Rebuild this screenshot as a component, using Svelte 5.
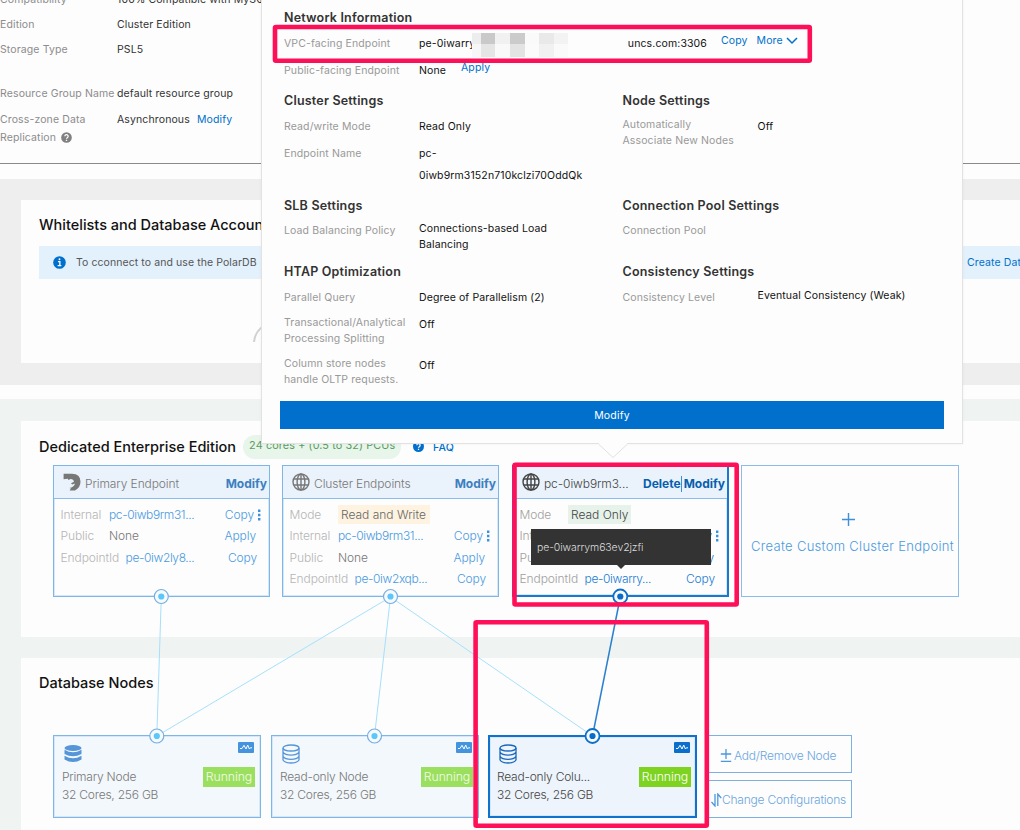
<script>
  const basics = [
    { label: "Compatibility", value: "100% Compatible with MySQL" },
    { label: "Edition", value: "Cluster Edition" },
    { label: "Storage Type", value: "PSL5", gap: true },
    { label: "Resource Group Name", value: "default resource group" },
  ];

  const groups = [
    {
      title: "Cluster Settings",
      rows: [
        { label: "Read/write Mode", value: "Read Only" },
        { label: "Endpoint Name", value: "pc- 0iwb9rm3152n710kclzi70OddQk", loose: true },
      ],
    },
    {
      title: "Node Settings",
      rows: [{ label: "Automatically Associate New Nodes", value: "Off", tallLabel: true, narrow: true }],
    },
    {
      title: "SLB Settings",
      tight: true,
      rows: [{ label: "Load Balancing Policy", value: "Connections-based Load Balancing", tallValue: true }],
    },
    {
      title: "Connection Pool Settings",
      tight: true,
      rows: [{ label: "Connection Pool", value: "" }],
    },
    {
      title: "HTAP Optimization",
      rows: [
        { label: "Parallel Query", value: "Degree of Parallelism (2)" },
        { label: "Transactional/Analytical Processing Splitting", value: "Off", tallLabel: true },
        { label: "Column store nodes handle OLTP requests.", value: "Off", tallLabel: true },
      ],
    },
    {
      title: "Consistency Settings",
      rows: [{ label: "Consistency Level", value: "Eventual Consistency (Weak)", tallValue: true }],
    },
  ];

  const endpoints = [
    {
      x: 53,
      title: "Primary Endpoint",
      icon: "polar",
      rows: [
        { label: "Internal", value: "pc-0iwb9rm31...", action: "Copy", more: true },
        { label: "Public", value: "None", plain: true, action: "Apply" },
        { label: "EndpointId", value: "pe-0iw2ly8...", action: "Copy" },
      ],
    },
    {
      x: 282,
      title: "Cluster Endpoints",
      icon: "globe",
      mode: "Read and Write",
      rows: [
        { label: "Internal", value: "pc-0iwb9rm31...", action: "Copy", more: true },
        { label: "Public", value: "None", plain: true, action: "Apply" },
        { label: "EndpointId", value: "pe-0iw2xqb...", action: "Copy" },
      ],
    },
    {
      x: 512,
      title: "pc-0iwb9rm3...",
      icon: "globe",
      mode: "Read Only",
      active: true,
      rows: [
        { label: "Internal", value: "pe-0iwarry...", action: "Copy", more: true },
        { label: "Public", value: "None", plain: true, action: "Apply" },
        { label: "EndpointId", value: "pe-0iwarry...", action: "Copy" },
      ],
    },
  ];

  const nodes = [
    { x: 53, name: "Primary Node", solid: true },
    { x: 271, name: "Read-only Node" },
    { x: 488, name: "Read-only Colu...", active: true },
  ];

  const links = [
    [161.3, 156.8],
    [390.5, 156.8],
    [390.5, 374.5],
    [390.5, 592.5],
    [620.3, 592.5, true],
  ];

  const ports = [
    [161.3, 596.5],
    [390.5, 596.5],
    [620.3, 596.5, true],
    [156.8, 736],
    [374.5, 736],
    [592.5, 736, true],
  ];

  // masked part of the endpoint address: x, width, upper shade, lower shade
  const mask = [
    [0, 9, "#ededed", "#f7f7f7"],
    [9, 14, "#c9c9c9", "#e5e5e5"],
    [23, 15, "#f1f1f1", "#f9f9f9"],
    [38, 15, "#cbcbcb", "#e3e3e3"],
    [53, 14, "#fafafa", "#fbfbfb"],
    [67, 15, "#e9e9e9", "#f1f1f1"],
    [82, 14, "#f3f3f3", "#fafafa"],
  ];
</script>

<div class="page">
  <section class="basics">
    {#each basics as item}
      <div class="basic" class:gap={item.gap}>
        <span class="label">{item.label}</span>
        <span>{item.value}</span>
      </div>
    {/each}
    <div class="basic zone">
      <span class="label">
        Cross-zone Data<br />Replication
        <svg class="help" viewBox="0 0 12 12" width="11" height="11">
          <circle cx="6" cy="6" r="5.8" fill="#808080" />
          <path d="M4.2 4.7a1.8 1.8 0 1 1 2.7 1.5Q6 6.7 6 7.3M6 8.5v1.2" fill="none" stroke="#fff" stroke-width="1.4" />
        </svg>
      </span>
      <span>Asynchronous <a href="#modify">Modify</a></span>
    </div>
  </section>

  <section class="band grey">
    <div class="card accounts">
      <h2>Whitelists and Database Accoun</h2>
      <div class="notice">
        <svg viewBox="0 0 14 14" width="13" height="13">
          <circle cx="7" cy="7" r="6.8" fill="#0070cc" />
          <path d="M5.4 6h2v4M5 10.3h4" fill="none" stroke="#fff" stroke-width="1.4" />
          <circle cx="7" cy="3.5" r="1" fill="#fff" />
        </svg>
        <span>To cconnect to and use the PolarDB</span>
        <a href="#create">Create Dat</a>
      </div>
      <svg class="ghost" viewBox="0 0 44 36" width="44" height="36">
        <circle cx="20" cy="11" r="10" />
        <path d="M1 36Q2 25 12 19M39 36Q38 25 28 19" />
      </svg>
    </div>
  </section>

  <section class="band mint">
    <div class="card edition">
      <div class="edition-head">
        <h2>Dedicated Enterprise Edition</h2>
        <span class="pcu">24 cores + (0.5 to 32) PCUs</span>
        <svg viewBox="0 0 12 12" width="11" height="11">
          <circle cx="6" cy="6" r="6" fill="#0070cc" />
          <path d="M4.2 4.7a1.8 1.8 0 1 1 2.7 1.5Q6 6.7 6 7.3M6 8.5v1.2" fill="none" stroke="#fff" stroke-width="1.4" />
        </svg>
        <a href="#faq">FAQ</a>
      </div>
    </div>
    <div class="card databases">
      <h2>Database Nodes</h2>
    </div>
  </section>

  <div class="canvas">
    {#each endpoints as endpoint}
      <article class="endpoint" class:active={endpoint.active} style="left: {endpoint.x}px">
        <header>
          {#if endpoint.icon === "globe"}
            <svg class="globe" viewBox="0 0 18 18" width="18" height="18">
              <circle cx="9" cy="9" r="8" />
              <ellipse cx="9" cy="9" rx="3.9" ry="8" />
              <path d="M9 1v16M1.6 6h14.8M1.6 12h14.8" />
            </svg>
          {:else}
            <svg viewBox="0 0 18 18" width="18" height="18">
              <path
                d="M.6.8H9Q17.4 1 17.5 8.6Q17.5 15 12 17.4H6.6L8 15.6 6.4 15Q11 14.4 12 10.6L9.2 11.6 8 10.2 11 8.8Q10.6 6.2 7.6 6L5.4 7 4.8 5.8 .6 6.2Z"
                fill="#777"
              />
            </svg>
          {/if}
          <span class="name">{endpoint.title}</span>
          <span class="tools">
            {#if endpoint.active}<a class="delete" href="#delete">Delete</a>{/if}
            <a href="#modify">Modify</a>
          </span>
        </header>
        <div class="lines">
          {#if endpoint.mode}
            <div class="line">
              <span class="key">Mode</span>
              <span class="mode" class:readonly={endpoint.active}>{endpoint.mode}</span>
            </div>
          {/if}
          {#each endpoint.rows as row}
            <div class="line">
              <span class="key">{row.label}</span>
              <span class="val" class:plain={row.plain}>{row.value}</span>
              <a class="act" class:apply={row.plain} class:with-more={row.more} href="#act">{row.action}</a>
              {#if row.more}
                <svg class="dots" viewBox="0 0 3 12" width="3" height="12">
                  <path d="M0 .5h2.4v2.4H0zM0 4.8h2.4v2.4H0zM0 9.1h2.4v2.4H0z" />
                </svg>
              {/if}
            </div>
          {/each}
        </div>
      </article>
    {/each}

    <div class="create">
      <svg viewBox="0 0 12 12" width="13" height="13"><path d="M6 0v12M0 6h12" stroke="#3f90dc" stroke-width="1.3" /></svg>
      <span>Create Custom Cluster Endpoint</span>
    </div>

    {#each nodes as node}
      <article class="node" class:active={node.active} style="left: {node.x}px">
        <div class="node-top">
          <svg class="db" class:solid={node.solid} viewBox="0 0 18 20" width="18" height="20">
            {#if node.solid}
              <ellipse cx="9" cy="4" rx="8.5" ry="3" />
              <path d="M.5 5.8Q9 10.8 17.5 5.8v4.1Q9 14.8.5 9.9ZM.5 11.7Q9 16.7 17.5 11.7V15.4Q9 20.6.5 15.4Z" />
            {:else}
              <ellipse cx="9" cy="4" rx="8" ry="3" />
              <path d="M1 4v12Q3 19 9 19T17 16V4M1 8.2Q3 11.2 9 11.2T17 8.2M1 12.4Q3 15.4 9 15.4T17 12.4" />
            {/if}
          </svg>
          <svg class="monitor" viewBox="0 0 16 11" width="16" height="11">
            <rect width="16" height="11" rx="1" />
            <path d="M2 6.5h2l2-3.2 2 3.7L9.7 3l1.7 4 1-1.2H14" />
          </svg>
        </div>
        <div class="node-row">
          <span>{node.name}</span>
          <span class="state">Running</span>
        </div>
        <div class="spec">32 Cores, 256 GB</div>
      </article>
    {/each}

    <div class="node-actions">
      <button>
        <svg viewBox="0 0 12 14" width="12" height="14"><path d="M6 0v10M.8 5h10.4M.8 12.3h10.4" /></svg>
        Add/Remove Node
      </button>
      <button class="change">
        <svg viewBox="0 0 11 14" width="11" height="14"><path d="M4 1v12L.5 9M6.8 13V1l3.4 4" /></svg>
        Change Configurations
      </button>
    </div>

    <svg class="wires" viewBox="0 0 1020 830" width="1020" height="830">
      {#each links as [from, to, active]}
        <line class:active x1={from} y1="597" x2={to} y2="736" />
      {/each}
      {#each ports as [x, y, active]}
        <circle class="ring" class:active cx={x} cy={y} r="7" />
        <circle class="dot" class:active cx={x} cy={y} r="3.1" />
      {/each}
    </svg>

    <div class="tooltip">pe-0iwarrym63ev2jzfi</div>
  </div>

  <div class="popover">
    <section class="network">
      <h3>Network Information</h3>
      <div class="row">
        <span class="label">VPC-facing Endpoint</span>
        <span class="address">
          <span>pe-0iwarry</span>
          <svg viewBox="0 0 96 24" width="96" height="24">
            {#each mask as [x, width, upper, lower]}
              <rect {x} y="0" {width} height="11" fill={upper} />
              <rect {x} y="11" {width} height="13" fill={lower} />
            {/each}
          </svg>
          <span class="tail">uncs.com:3306</span>
        </span>
        <a href="#copy">Copy</a>
        <a class="more" href="#more">
          More
          <svg viewBox="0 0 12 8" width="12" height="8"><path d="M1 1l5 5 5-5" fill="none" stroke="#0070cc" stroke-width="1.5" /></svg>
        </a>
      </div>
      <div class="row">
        <span class="label">Public-facing Endpoint</span>
        <span class="none">None</span>
        <a href="#apply">Apply</a>
      </div>
    </section>
    <div class="groups">
      {#each groups as group}
        <section>
          <h3 class:tight={group.tight}>{group.title}</h3>
          {#each group.rows as row}
            <div class="row">
              <span class="label" class:tall={row.tallLabel} class:narrow={row.narrow}>{row.label}</span>
              <span class="value" class:tall={row.tallValue} class:loose={row.loose}>{row.value}</span>
            </div>
          {/each}
        </section>
      {/each}
    </div>
    <button class="submit">Modify</button>
    <svg class="arrow" viewBox="0 0 28 16" width="28" height="16">
      <path d="M0 0v1.5L14 14.5 28 1.5V0" fill="#fdfdfd" />
      <path d="M0 1.5L14 14.5 28 1.5" fill="none" stroke="#e2e2e2" />
    </svg>
  </div>

  <svg class="marks" viewBox="0 0 1020 830" width="1020" height="830">
    <rect x="275" y="27" width="534.8" height="33.8" rx="1" />
    <rect x="514.5" y="464.7" width="222.2" height="139.8" rx="1" />
    <rect x="475.6" y="622.3" width="231.2" height="203.4" rx="1" />
  </svg>
</div>

<style>
  :global(body) {
    overflow: hidden;
  }
  .page {
    position: relative;
    width: 1020px;
    height: 830px;
    overflow: hidden;
    background: #fdfdfd;
    color: #333;
    font-family: Inter, "Liberation Sans", sans-serif;
    font-size: 10.5px;
    letter-spacing: 0.12px;
    line-height: 16px;
  }
  a {
    color: #0070cc;
    text-decoration: none;
  }
  h2 {
    margin: 0;
    color: #111;
    font-size: 14.5px;
    font-weight: 500;
    letter-spacing: 0;
    line-height: 20px;
    white-space: nowrap;
  }
  svg {
    flex: none;
    display: block;
  }

  .basics {
    display: flow-root;
    box-sizing: border-box;
    height: 164px;
    margin-bottom: 15px;
    border-bottom: 1px solid #8a8a8a;
  }
  .basic {
    display: flex;
    height: 25px;
    white-space: nowrap;
  }
  .basic:first-child {
    margin-top: -8px;
  }
  .basic.gap {
    height: 44px;
  }
  .basic .label {
    width: 117px;
    color: #8c8c8c;
  }
  .basic.zone {
    margin-top: 1px;
  }
  .zone .label {
    line-height: 18px;
    margin-top: -1px;
  }
  .zone a {
    margin-left: 4px;
  }
  .help {
    display: inline-block;
    margin-left: 2px;
    vertical-align: -2px;
  }

  .band {
    box-sizing: border-box;
    padding-left: 21px;
  }
  .grey {
    height: 206px;
    padding-top: 21px;
    margin-bottom: 14px;
    background: #eee;
  }
  .mint {
    height: 431px;
    padding-top: 22px;
    background: #eff4f3;
  }
  .card {
    box-sizing: border-box;
    padding-left: 18px;
    background: #fdfdfd;
  }
  .accounts {
    height: 163px;
    padding-top: 15px;
  }
  .notice {
    display: flex;
    align-items: center;
    height: 33px;
    margin-top: 11px;
    padding-left: 14px;
    background: #e3f1fd;
    color: #555;
    white-space: nowrap;
  }
  .notice span {
    margin-left: 10px;
    padding-top: 1px;
    letter-spacing: 0.08px;
  }
  .notice a {
    width: 53px;
    margin-left: auto;
    padding-top: 1px;
  }
  .ghost {
    margin: 27px 0 0 214px;
    fill: none;
    stroke: #d2d2d2;
    stroke-width: 2;
  }
  .edition {
    height: 216px;
    margin-bottom: 21px;
    padding-top: 13px;
  }
  .edition-head {
    display: flex;
    align-items: center;
    height: 25px;
  }
  .pcu {
    box-sizing: border-box;
    width: 158px;
    height: 24px;
    margin: 1px 12px 0 7px;
    padding-left: 6px;
    border-radius: 12px;
    background: #e8f5ea;
    color: #5b9c63;
    font-size: 10.8px;
    line-height: 22px;
    white-space: nowrap;
  }
  .edition-head a {
    margin-left: 9px;
    padding-top: 3px;
    font-weight: 500;
  }
  .databases {
    height: 172px;
    padding-top: 15px;
  }

  .canvas {
    position: absolute;
    inset: 0;
    font-size: 12px;
    font-weight: 300;
    letter-spacing: -0.1px;
  }
  .endpoint {
    position: absolute;
    top: 465px;
    box-sizing: border-box;
    width: 217px;
    height: 132px;
    border: 1px solid #7fb6e8;
    box-shadow: inset 0 0 0 1px #d6e8f8;
    color: #777;
  }
  .endpoint.active {
    border-width: 1px 2px 2px 1px;
    border-color: #1a78cf;
    color: #444;
  }
  .endpoint header {
    box-sizing: border-box;
    display: flex;
    align-items: center;
    height: 33px;
    padding: 0 2px 0 9px;
    border-bottom: 1.5px solid #8abdec;
    background: #eaf2fb;
  }
  .name {
    margin: 3px 0 0 4px;
  }
  .tools {
    display: flex;
    margin: 3px 0 0 auto;
    font-weight: 700;
    letter-spacing: 0;
  }
  .tools a {
    color: #3c80c0;
  }
  .active .tools a {
    color: #075fae;
  }
  .tools .delete {
    border-right: 1px solid #3f8dd5;
    margin-right: 2px;
  }
  .globe {
    fill: none;
    stroke: #777;
    stroke-width: 1.4;
  }
  .active .globe {
    stroke: #444;
  }
  .lines {
    padding: 5px 0 0 6.5px;
  }
  .line {
    display: flex;
    align-items: center;
    height: 21.5px;
  }
  .key {
    min-width: 48.5px;
    color: #b5b5b5;
  }
  .active .key {
    color: #a0a0a0;
  }
  .val {
    color: #4a9ae0;
  }
  .val:not(.plain) {
    margin-right: auto;
    letter-spacing: -0.38px;
  }
  .line:last-child .val {
    margin-left: 6.5px;
  }
  .val.plain {
    color: #777;
  }
  .act {
    margin-left: auto;
    margin-right: 12px;
    color: #4a9ae0;
  }
  .act.apply {
    margin-right: 13px;
  }
  .act.with-more {
    margin-right: 4px;
  }
  .dots {
    margin-right: 8px;
    fill: #3f90dc;
  }
  .active .act,
  .active .val {
    color: #1a7bd4;
  }
  .mode {
    padding: 2px 4px 1px 3px;
    background: #fdf3e0;
    color: #666;
    letter-spacing: 0;
  }
  .mode.readonly {
    padding-right: 3px;
    background: #e6f2ea;
    color: #444;
  }
  .create {
    position: absolute;
    left: 741px;
    top: 465px;
    box-sizing: border-box;
    display: flex;
    flex-direction: column;
    align-items: center;
    width: 218px;
    height: 132px;
    padding: 47px 0 0 5px;
    border: 1px solid #8abdec;
    color: #4a9ae0;
    font-size: 13px;
    letter-spacing: 0.3px;
    white-space: nowrap;
  }
  .create svg {
    margin-right: 9px;
  }
  .create span {
    margin-top: 12px;
  }

  .node {
    position: absolute;
    top: 735px;
    box-sizing: border-box;
    width: 208px;
    height: 83px;
    padding: 7px 5px 0 8px;
    border: 1px solid #7fb6e8;
    box-shadow: inset 0 0 0 1px #d6e8f8;
    background: #f3f8fc;
    color: #777;
    letter-spacing: -0.22px;
  }
  .node.active {
    width: 209px;
    padding: 6px 4px 0 7px;
    border: 2px solid #0f73ce;
    background: #edf4fb;
    color: #444;
  }
  .node-top {
    display: flex;
    justify-content: space-between;
    height: 24px;
    padding: 0 1px 0 2px;
  }
  .db {
    margin-top: 1px;
    fill: none;
    stroke: #5595d8;
    stroke-width: 1.3;
  }
  .db.solid {
    fill: #5595d8;
    stroke: none;
  }
  .active .db {
    stroke: #1a68bd;
  }
  .monitor {
    margin-top: -1px;
  }
  .monitor rect {
    fill: #4394dc;
  }
  .active .monitor rect {
    fill: #0a6fcb;
  }
  .monitor path {
    fill: none;
    stroke: #fff;
  }
  .node-row {
    display: flex;
    align-items: center;
    justify-content: space-between;
    height: 20px;
  }
  .state {
    width: 52px;
    height: 20px;
    margin-top: -1px;
    background: #9bdf5f;
    color: #f4fbe9;
    font-size: 12.3px;
    letter-spacing: -0.1px;
    line-height: 20px;
    text-align: center;
  }
  .active .state {
    background: #7ed321;
    color: #fff;
  }
  .node-actions {
    position: absolute;
    left: 705px;
    top: 735px;
    display: flex;
    flex-direction: column;
    gap: 7px;
    width: 147px;
  }
  .node-actions button {
    display: flex;
    align-items: center;
    height: 38px;
    padding: 4px 0 0 14px;
    border: 1px solid #7fb0e0;
    background: #fdfdfd;
    color: #6ba6de;
    font: inherit;
    letter-spacing: -0.23px;
    white-space: nowrap;
    gap: 2px;
  }
  .node-actions .change {
    padding: 2px 0 0 5px;
    gap: 0;
  }
  .node-actions path {
    fill: none;
    stroke: #4d97dc;
    stroke-width: 1.3;
  }
  .wires {
    position: absolute;
    inset: 0;
  }
  line {
    stroke: #a6e0fb;
  }
  line.active {
    stroke: #2a80cf;
    stroke-width: 1.5;
  }
  .ring {
    fill: #f6fafd;
    stroke: #76aee2;
    stroke-width: 1.2;
  }
  .ring.active {
    stroke: #0f6fc8;
    stroke-width: 1.8;
  }
  .dot {
    fill: #5cc8fa;
  }
  .dot.active {
    fill: #0a6bc8;
  }
  .tooltip {
    position: absolute;
    left: 531px;
    top: 529px;
    box-sizing: border-box;
    width: 180px;
    height: 36px;
    padding-left: 6px;
    background: #333;
    color: #ddd;
    font-size: 10.5px;
    line-height: 37px;
  }
  .tooltip::after {
    content: "";
    position: absolute;
    left: 86px;
    top: 36px;
    border: 4px solid transparent;
    border-top-color: #333;
  }

  .popover {
    position: absolute;
    left: 261px;
    top: -1px;
    box-sizing: border-box;
    width: 702px;
    height: 445px;
    padding: 8px 18px 0;
    border: 1px solid #e2e2e2;
    background: #fdfdfd;
    box-shadow: 0 0 3px rgba(0, 0, 0, 0.05);
    color: #111;
  }
  h3 {
    margin: 0 0 3px;
    color: #333;
    font-size: 12.5px;
    font-weight: 600;
    letter-spacing: 0.2px;
    line-height: 20px;
  }
  h3.tight {
    margin-bottom: 2px;
  }
  .network {
    height: 83px;
    padding-left: 4px;
  }
  .row {
    display: flex;
    min-height: 27px;
  }
  .row .label {
    flex: none;
    width: 135px;
    padding-top: 5px;
    color: #999;
  }
  .row .label.tall {
    box-sizing: border-box;
    min-height: 41px;
    padding: 3px 10px 0 0;
  }
  .row .label.narrow {
    padding-right: 20px;
  }
  .network .row {
    height: 27px;
    white-space: nowrap;
  }
  .address {
    display: flex;
    width: 302px;
    padding-top: 5px;
  }
  .address > span:first-child {
    width: 53px;
    overflow: hidden;
  }
  .address svg {
    margin-top: -3px;
  }
  .tail {
    margin-left: auto;
    padding-right: 14px;
  }
  .row a {
    padding-top: 2px;
  }
  .more {
    display: flex;
    align-items: center;
    gap: 3px;
    height: 16px;
    margin-left: 9px;
  }
  .none {
    width: 42px;
    padding-top: 5px;
  }
  .groups {
    display: grid;
    grid-template-columns: 338.5px 1fr;
    grid-template-rows: 105px 66px 139px;
    padding-left: 4px;
  }
  .value {
    max-width: 172px;
    padding-top: 5px;
  }
  .value.tall {
    max-width: 160px;
    padding-top: 3px;
  }
  .value.loose {
    padding-top: 2px;
    line-height: 22px;
  }
  .submit {
    display: block;
    width: 664px;
    height: 28px;
    padding: 2px 0 0;
    border: 0;
    background: #0070cc;
    color: #fff;
    font: inherit;
    letter-spacing: 0.2px;
  }
  .arrow {
    position: absolute;
    left: 337px;
    bottom: -16px;
  }

  .marks {
    position: absolute;
    inset: 0;
    fill: none;
    stroke: #ff0f58;
    stroke-width: 4.6;
  }
</style>
